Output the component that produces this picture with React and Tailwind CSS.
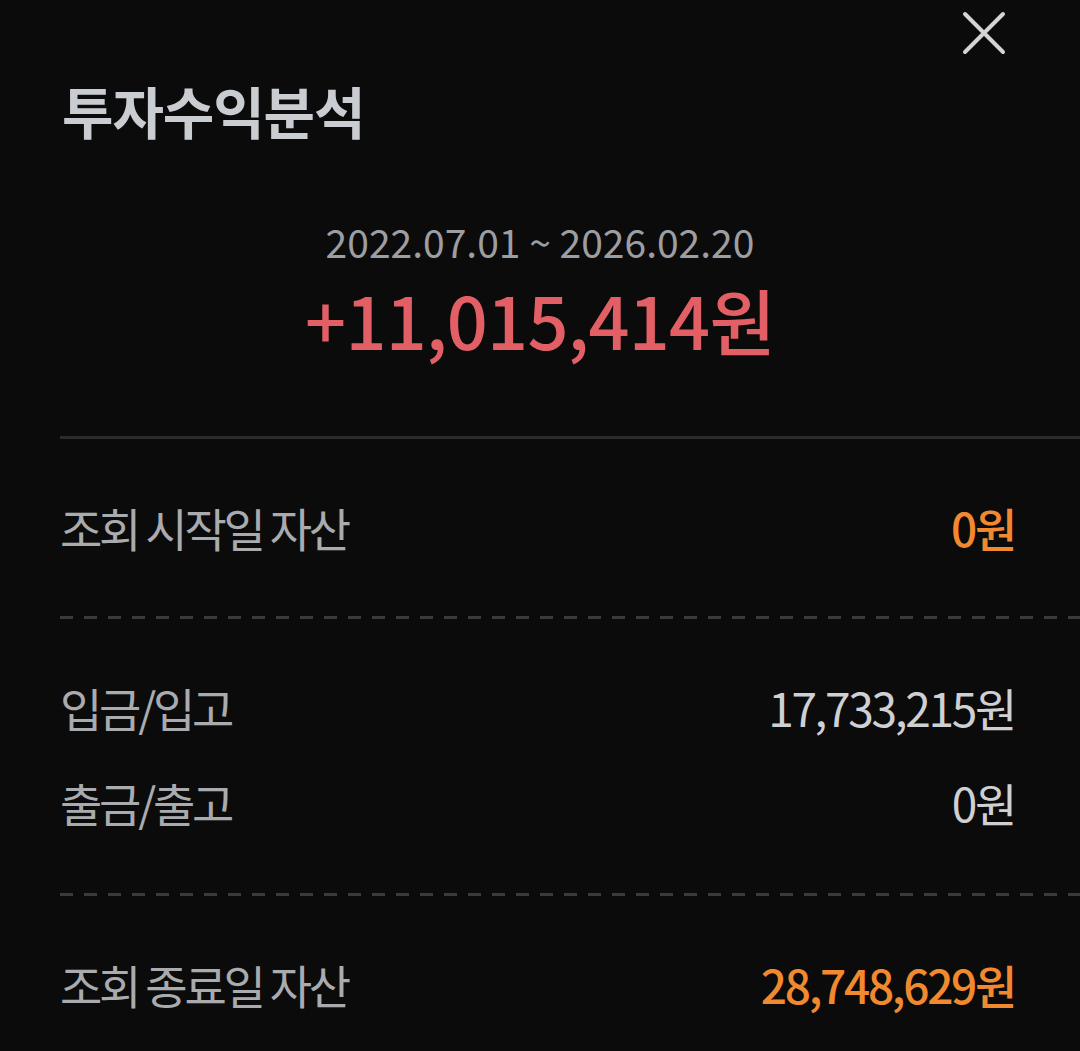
import React from 'react';

const font = { fontFamily: '"Noto Sans CJK KR", "Noto Sans", sans-serif' };

const CloseIcon = () => (
  <svg width="46" height="46" viewBox="0 0 46 46" fill="none">
    <path d="M4 4L42 42M42 4L4 42" stroke="#d4d4d6" strokeWidth="4" strokeLinecap="round" />
  </svg>
);

const Dashed = () => (
  <div className="h-[3px] w-full bg-[repeating-linear-gradient(to_right,#3a3a3a_0_13px,transparent_13px_24px)]" />
);

const Row = ({ label, value, valueClass }) => (
  <div className="flex items-center justify-between pr-[65px] leading-[60px]">
    <span className="text-[46px] tracking-[-0.07em] text-[#a9abae]">{label}</span>
    <span className={`text-[46px] tracking-[-0.05em] ${valueClass}`}>{value}</span>
  </div>
);

const App = () => {
  return (
    <div className="w-[1080px] h-[1051px] bg-[#0b0b0b] overflow-hidden relative" style={font}>
      {/* close */}
      <button type="button" className="absolute left-[961px] top-[10px]">
        <CloseIcon />
      </button>

      {/* title */}
      <h1 className="pl-[62px] pt-[75px] text-[56px] font-bold leading-[70px] text-[#c9ccd0] tracking-[-0.02em]">
        투자수익분석
      </h1>

      {/* summary */}
      <div className="flex flex-col items-center mt-[71px]">
        <p className="text-[39px] leading-[50px] text-[#9d9ea1]">2022.07.01 ~ 2026.02.20</p>
        <p className="mt-[8px] text-[72px] leading-[90px] font-medium text-[#e25f66] tracking-[-0.01em]">
          +11,015,414원
        </p>
      </div>

      <div className="pl-[60px] mt-[72px]">
        <div className="h-[3px] bg-[#2b2b2b]" />

        <div className="pt-[58px] pb-[59px]">
          <Row label="조회 시작일 자산" value="0원" valueClass="text-[#f0892f] font-medium" />
        </div>

        <Dashed />

        <div className="pt-[58px] pb-[61px] flex flex-col gap-[35px]">
          <Row label="입금/입고" value="17,733,215원" valueClass="text-[#cfd0d3]" />
          <Row label="출금/출고" value="0원" valueClass="text-[#cfd0d3]" />
        </div>

        <Dashed />

        <div className="pt-[58px]">
          <Row label="조회 종료일 자산" value="28,748,629원" valueClass="text-[#f0892f] font-medium" />
        </div>
      </div>
    </div>
  );
};

export default App;
